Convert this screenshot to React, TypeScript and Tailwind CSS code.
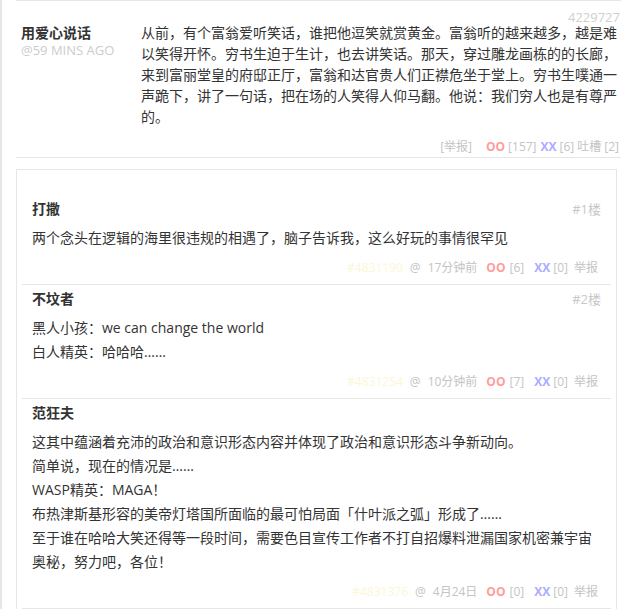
import React from "react";

const font = { fontFamily: '"Open Sans", "Noto Sans CJK SC", sans-serif' };

type C = {
  name: string;
  floor: string;
  lines: string[];
  id: string;
  time: string;
  oo: number;
  xx: number;
};

const comments: C[] = [
  {
    name: "打撒",
    floor: "#1楼",
    lines: ["两个念头在逻辑的海里很违规的相遇了，脑子告诉我，这么好玩的事情很罕见"],
    id: "#4831190",
    time: "17分钟前",
    oo: 6,
    xx: 0,
  },
  {
    name: "不坟者",
    floor: "#2楼",
    lines: ["黑人小孩：we can change the world", "白人精英：哈哈哈……"],
    id: "#4831254",
    time: "10分钟前",
    oo: 7,
    xx: 0,
  },
  {
    name: "范狂夫",
    floor: "",
    lines: [
      "这其中蕴涵着充沛的政治和意识形态内容并体现了政治和意识形态斗争新动向。",
      "简单说，现在的情况是……",
      "WASP精英：MAGA！",
      "布热津斯基形容的美帝灯塔国所面临的最可怕局面「什叶派之弧」形成了……",
      "至于谁在哈哈大笑还得等一段时间，需要色目宣传工作者不打自招爆料泄漏国家机密兼宇宙奥秘，努力吧，各位！",
    ],
    id: "#4831376",
    time: "4月24日",
    oo: 0,
    xx: 0,
  },
];

function Comment({ c }: { c: C }) {
  return (
    <div className="mx-[5px] px-[10px] pt-[4px] pb-[6px] border-b border-[#e6e6e6]">
      <div className="flex justify-between items-center h-[20px]">
        <span className="text-[14px] leading-[20px] font-bold text-[#333]">{c.name}</span>
        <span className="text-[13px] leading-[20px] text-[#c8c8c8]">{c.floor}</span>
      </div>
      <div className="mt-[7px] text-[14px] leading-[24px] text-[#333]">
        {c.lines.map((l, i) => (
          <div key={i}>{l}</div>
        ))}
      </div>
      <div className="mt-[8px] mr-[3px] flex justify-end items-center text-[12px] leading-[20px] text-[#c4c4c4] whitespace-nowrap">
        <span className="text-[#fbf7d6]">{c.id}</span>
        <span className="ml-[7px]">@</span>
        <span className="ml-[7px]">{c.time}</span>
        <span className="ml-[9px] font-bold text-[#ff9c9c]">OO</span>
        <span className="ml-[4px]">[{c.oo}]</span>
        <span className="ml-[10px] font-bold text-[#ababff]">XX</span>
        <span className="ml-[3px]">[{c.xx}]</span>
        <span className="ml-[6px]">举报</span>
      </div>
    </div>
  );
}

export default function App() {
  return (
    <div style={font} className="w-[641px] h-[609px] overflow-hidden bg-white border-l-2 border-[#e6e6e6]">
      <div className="ml-[14px] w-[605px]">
        <div className="relative flex border-t border-b border-[#e6e6e6] pt-[21px] pl-[5px] pr-[2px] pb-[1px]">
          <span className="absolute top-[11px] right-[1px] text-[13px] leading-[10px] text-[#cfcfcf]">4229727</span>
          <div className="w-[120px] shrink-0">
            <div className="text-[14px] leading-[21px] font-bold text-[#333]">用爱心说话</div>
            <div className="text-[13px] leading-[14px] text-[#cccccc]">@59 MINS AGO</div>
          </div>
          <div className="flex-1 min-w-0">
            <div className="text-[14px] leading-[21px] text-[#333]">
              从前，有个富翁爱听笑话，谁把他逗笑就赏黄金。富翁听的越来越多，越是难以笑得开怀。穷书生迫于生计，也去讲笑话。那天，穿过雕龙画栋的的长廊，来到富丽堂皇的府邸正厅，富翁和达官贵人们正襟危坐于堂上。穷书生噗通一声跪下，讲了一句话，把在场的人笑得人仰马翻。他说：我们穷人也是有尊严的。
            </div>
            <div className="mt-[11px] flex justify-end items-center text-[12px] leading-[18px] text-[#c4c4c4] whitespace-nowrap">
              <span>[举报]</span>
              <span className="ml-[14px] font-bold text-[#ff9c9c]">OO</span>
              <span className="ml-[3px]">[157]</span>
              <span className="ml-[4px] font-bold text-[#ababff]">XX</span>
              <span className="ml-[3px]">[6]</span>
              <span className="ml-[3px]">吐槽</span>
              <span className="ml-[3px]">[2]</span>
            </div>
          </div>
        </div>
        <div className="mt-[11px] w-[601px] border border-[#e6e6e6] pt-[25px]">
          {comments.map((c, i) => (
            <Comment key={i} c={c} />
          ))}
        </div>
      </div>
    </div>
  );
}
